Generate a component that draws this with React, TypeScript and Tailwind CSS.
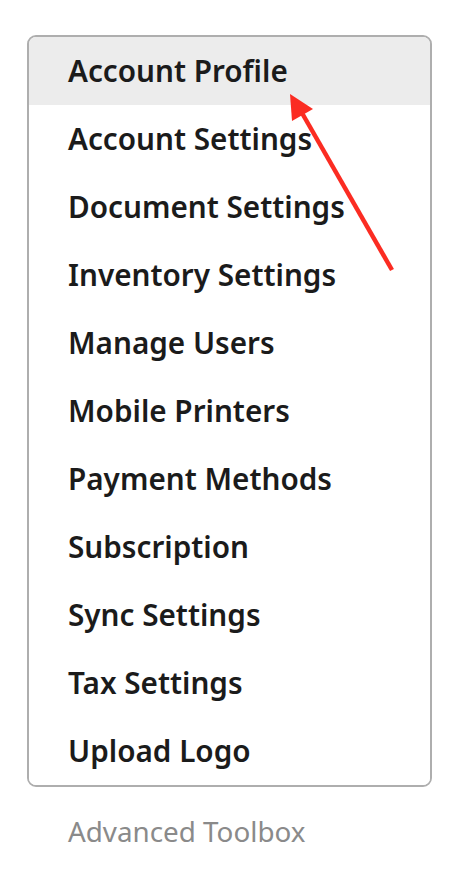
const items = [
  "Account Profile",
  "Account Settings",
  "Document Settings",
  "Inventory Settings",
  "Manage Users",
  "Mobile Printers",
  "Payment Methods",
  "Subscription",
  "Sync Settings",
  "Tax Settings",
  "Upload Logo",
];

export default function App() {
  return (
    <div className="relative min-h-[870px] w-[468px] bg-white pt-[35px] pl-[27px] font-['Noto_Sans',sans-serif]">
      <ul className="w-[405px] overflow-hidden rounded-[9px] border-2 border-[#aeaeae]">
        {items.map((item, i) => (
          <li
            key={item}
            className={`flex h-[68px] items-center pl-[39px] text-[29.7px] font-semibold text-[#1b1b1b] ${
              i === 0 ? "bg-[#ececec]" : "bg-white"
            }`}
          >
            {item}
          </li>
        ))}
      </ul>
      <div className="flex h-[90px] items-center pl-[41px] text-[27.8px] text-[#8a8a8a]">
        Advanced Toolbox
      </div>

      {/* annotation arrow */}
      <svg className="absolute left-0 top-0" width="468" height="870" viewBox="0 0 468 870">
        <line x1="392" y1="270" x2="302" y2="113" stroke="#fb2c22" strokeWidth="4.5" />
        <polygon points="290,94 292,121 313,109" fill="#fb2c22" />
      </svg>
    </div>
  );
}
